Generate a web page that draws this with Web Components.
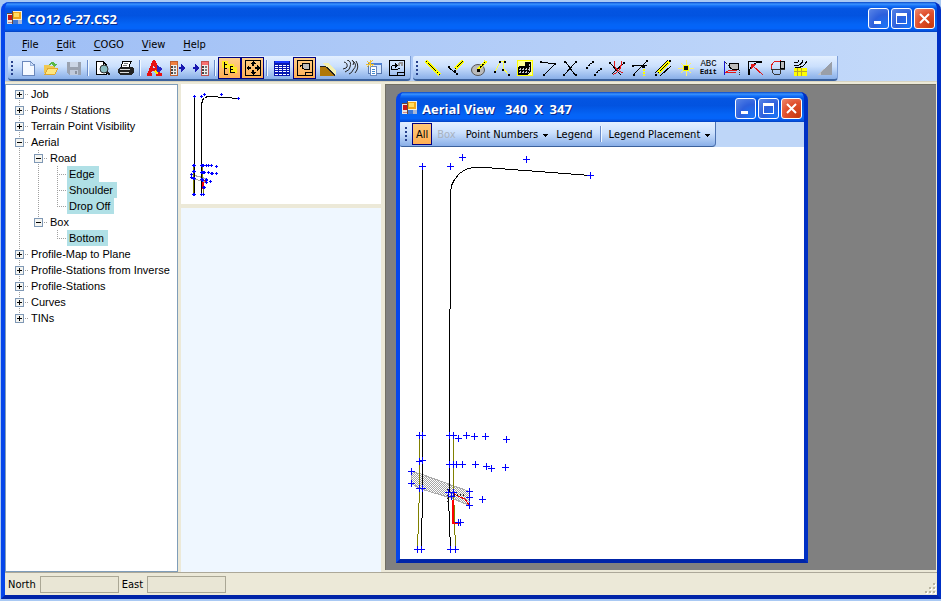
<!DOCTYPE html>
<html lang="en">
<head>
<meta charset="utf-8">
<title>CO12 6-27.CS2</title>
<style>
  html, body { height: 100%; margin: 0; }
  body {
    --ui: "DejaVu Sans Condensed", "Open Sans", sans-serif;
    --face: #ece9d8;
    box-sizing: border-box;
    padding: 2px 0 2px 1px;
    background: #a9c9f3;
    font: 11px/16px "Liberation Sans", sans-serif;
    color: #000;
    overflow: hidden;
  }
  body > xp-window { height: 100%; }
  .strips { display: flex; background: linear-gradient(90deg, #9ebef5, #c4dafa); padding-left: 3px; }
  main {
    flex: 1; min-height: 0;
    display: grid; grid-template-columns: 173px 200px 1fr; column-gap: 3px;
    background: var(--face); border-top: 1px solid #d8d4c0;
    padding: 2px 1px 0 0;
  }
  .side { display: flex; flex-direction: column; gap: 4px; min-height: 0; }
  .side > aerial-plot { height: 120px; background: #fff; }
  .notes { flex: 1; background: #eff7ff; }
  .mdi { position: relative; background: #808080; border: solid #716f64; border-width: 1px 0 0 1px; margin: 0 0 2px 1px; }
  .mdi > xp-window { position: absolute; inset: 7px 128px 7px 10px; }
</style>
</head>
<body>
<xp-window caption="CO12 6-27.CS2">
  <menu-bar items="File,Edit,COGO,View,Help"></menu-bar>
  <div class="strips">
    <tool-strip tools="new open save | preview print | font calcout calcin | tree* extents* | table view* slope contour layout cycle" label="Standard"></tool-strip>
    <tool-strip tools="line perp circle points grid angle cross parallel curves tee offset point abc region tangent shape mesh ramp" label="COGO"></tool-strip>
  </div>
  <main>
    <tree-view>
      <tree-node label="Job" kind="closed"></tree-node>
      <tree-node label="Points / Stations" kind="closed"></tree-node>
      <tree-node label="Terrain Point Visibility" kind="closed"></tree-node>
      <tree-node label="Aerial" kind="open">
        <tree-node label="Road" kind="open">
          <tree-node label="Edge" marked></tree-node>
          <tree-node label="Shoulder" marked></tree-node>
          <tree-node label="Drop Off" marked></tree-node>
        </tree-node>
        <tree-node label="Box" kind="open">
          <tree-node label="Bottom" marked></tree-node>
        </tree-node>
      </tree-node>
      <tree-node label="Profile-Map to Plane" kind="closed"></tree-node>
      <tree-node label="Profile-Stations from Inverse" kind="closed"></tree-node>
      <tree-node label="Profile-Stations" kind="closed"></tree-node>
      <tree-node label="Curves" kind="closed"></tree-node>
      <tree-node label="TINs" kind="closed"></tree-node>
    </tree-view>
    <div class="side">
      <aerial-plot overview></aerial-plot>
      <div class="notes"></div>
    </div>
    <div class="mdi">
      <xp-window caption="Aerial View   340  X  347">
        <view-bar></view-bar>
        <aerial-plot></aerial-plot>
      </xp-window>
    </div>
  </main>
  <status-bar></status-bar>
</xp-window>

<script>
const define = (name, build) => customElements.define(name, class extends HTMLElement {
  connectedCallback() {
    if (!this.shadowRoot) this.attachShadow({ mode: 'open' }).innerHTML = build(this);
  }
});
const svg = (body, w = 16, h = w, extra = '') =>
  `<svg width="${w}" height="${h}" viewBox="0 0 ${w} ${h}" shape-rendering="crispEdges" fill="none" stroke-width="1" aria-hidden="true" ${extra}>${body}</svg>`;
const dot = (x, y, c = '#000', s = 2) => `<rect x="${x}" y="${y}" width="${s}" height="${s}" fill="${c}"/>`;
const ruler = d => `<path d="${d}" stroke="#ff0" stroke-width="3"/><path d="${d}" stroke="#000" stroke-dasharray="2 1"/>`;
const keys = x => [6, 9, 12].map(y => dot(x, y, '#444') + dot(x + 3, y, '#777')).join('');

const gripCss = `
  .grip { flex: none; width: 3px; height: 15px; background: repeating-linear-gradient(#27418c 0 2px, transparent 2px 4px) 0 0 / 2px 100% no-repeat; }
  .sep { flex: none; box-sizing: border-box; width: 6px; height: 16px; border: solid transparent; border-width: 0 2px; background: linear-gradient(90deg, #6a8ccb 50%, #f1f9ff 50%) content-box; }
`;

define('xp-window', el => `
<style>
  :host {
    display: flex; flex-direction: column; box-sizing: border-box; min-width: 0;
    border: solid; border-width: 0 4px 4px; border-color: #0a3fe0 #0030c4 #0024a8 #0546ea;
    border-radius: 8px 8px 0 0; background: #0546ea; overflow: hidden;
  }
  header {
    flex: none; box-sizing: border-box; height: 30px; margin: 0 -4px; padding: 2px 6px 0 6px;
    display: flex; align-items: center; gap: 2px;
    background: linear-gradient(#0a48c8 0, #3a93ff 7%, #1470f8 13%, #0455e2 22%, #0253e0 45%, #0464f6 75%, #0464fa 88%, #0450dc 96%, #0340bd 100%);
    border-radius: 8px 8px 0 0;
  }
  h1 {
    flex: 1; margin: 0 0 0 2px; white-space: pre; overflow: hidden;
    font: bold 13px/20px "Open Sans", sans-serif; color: #fff; text-shadow: 1px 1px #0a2a8c; padding-top: 2px;
  }
  button {
    flex: none; width: 21px; height: 21px; padding: 0; border: 1px solid #fff; border-radius: 3px;
    background: radial-gradient(circle at 85% 90%, #1b74f5, #2c5fdc 50%, #5b86e6); display: grid; place-items: center;
  }
  .close { background: radial-gradient(circle at 85% 90%, #c83a10, #e04f2c 55%, #ee8a70); }
  .main { flex: 1; min-height: 0; display: flex; flex-direction: column; }
  ::slotted(aerial-plot) { flex: 1; min-height: 0; background: #fff; }
</style>
<header>
  ${svg(`<rect x="5" y="1" width="10" height="12" fill="#f4f0e0"/><rect x="6" y="2" width="8" height="7" fill="#f0a818"/><rect x="7" y="3" width="5" height="4" fill="#ffdc60"/>
    <rect x="0" y="3" width="6" height="11" fill="#e8e4e0"/><rect x="1" y="5" width="4" height="5" fill="#c81818"/><path d="M1 12.5h4" stroke="#c88"/>
    <rect x="6" y="10" width="5" height="4" fill="#3c78d8"/><rect x="11" y="10" width="4" height="4" fill="#a8b8d8"/><path d="M5.5 1V14M0 3.5H5" stroke="#684838"/>`)}
  <h1>${el.getAttribute('caption')}</h1>
  <button aria-label="Minimize">${svg('<rect x="3" y="10" width="7" height="3" fill="#fff"/>', 15)}</button>
  <button aria-label="Maximize">${svg('<path d="M2 3.5H13" stroke="#fff" stroke-width="3"/><path d="M2.5 3V12.5H12.5V3" stroke="#fff"/>', 15)}</button>
  <button class="close" aria-label="Close">${svg('<path d="M3 3L12 12M12 3L3 12" stroke="#fff" stroke-width="2" shape-rendering="auto"/>', 15)}</button>
</header>
<div class="main"><slot></slot></div>`);

define('menu-bar', el => `
<style>
  :host { display: flex; box-sizing: border-box; height: 24px; padding: 1px 0 0 8px; background: linear-gradient(90deg, #9ebef5, #c4dafa); }
  button { border: 0; padding: 0 9px; background: none; font: 11px/22px var(--ui); color: #000; }
  u { text-underline-offset: 2px; }
</style>
${el.getAttribute('items').split(',').map(t => `<button><u>${t[0]}</u>${t.slice(1)}</button>`).join('')}`);

const icons = {
  new: `<path d="M2.5 1.5H10L14.500 5V15.5H2.5Z" fill="#f4f9ff" stroke="#6a88bc"/><path d="M10 2V5.5H14" stroke="#9ab4dc" fill="#cfe0f8"/>`,
  open: `<path d="M1 5H6L7 6H12V13H1Z" fill="#f0c850"/><path d="M2 14L5 8H15L12 14Z" fill="#ffe680" stroke="#e0a830"/><path d="M6 5C7 1 11 1 12 4H14L11 7L9 4H10" fill="#58b848"/>`,
  save: `<path d="M1 2H15V15H3L1 13Z" fill="#9aa2b0"/><rect x="4" y="2" width="8" height="5" fill="#ccd6e6"/><rect x="4" y="10" width="8" height="5" fill="#c0cadc"/><rect x="9" y="11" width="2" height="3" fill="#8a92a0"/>`,
  preview: `<path d="M1.5 1.5H8L11.5 5V14.5H1.5Z" fill="#fff" stroke="#000"/><path d="M8 2V5H11" stroke="#000"/><circle cx="9" cy="9" r="4" fill="#88bcc0" stroke="#333" shape-rendering="auto"/><path d="M12 12L15 15" stroke="#222" stroke-width="2"/>`,
  print: `<path d="M5 1.5H13L11 7H3Z" fill="#fff" stroke="#000"/><path d="M6 3.5H10M5 5.5H9" stroke="#777"/><path d="M2 7H14L16 8V12L13 15H2L0 13V9Z" fill="#222"/><path d="M2 9.5H12M2 12.5H11" stroke="#ddd"/>`,
  font: `<path d="M0 14.5H5M9 14.5H15M2 14L7 1L12 14M4 9.5H11" stroke="#e81010" stroke-width="3"/><path d="M10 5L16 9L12 12H10Z" fill="#2828c0"/><path d="M8 11L11 14" stroke="#fe0" stroke-width="2"/>`,
  calcout: `<rect x="0" y="1" width="8" height="15" fill="#c06030"/><rect x="1" y="5" width="6" height="10" fill="#eee"/><rect x="1" y="2" width="6" height="3" fill="#f08040"/>${keys(1)}<path d="M9 7H11V4L16 8L11 12V9H9Z" fill="#1818b0"/>`,
  calcin: `<rect x="8" y="1" width="8" height="15" fill="#c05050"/><rect x="9" y="5" width="6" height="10" fill="#eee"/><rect x="9" y="2" width="6" height="3" fill="#f87070"/>${keys(9)}<path d="M0 7H2V4L7 8L2 12V9H0Z" fill="#1818b0"/>`,
  tree: `<path d="M0 1H6V4H12V7H15V13H7V8H0Z" fill="#ffee20"/><path d="M2.5 2V14.5H6M2 4.5H5M2 8.5H5M8.5 6V13M8 6.5H11M8 9.5H11M8 12.5H13" stroke="#000"/>`,
  extents: `<rect x="0.5" y="0.5" width="15" height="15" stroke="#000"/><path d="M8 1L11 4H5ZM8 15L5 12H11ZM1 8L4 5V11ZM15 8L12 11V5Z" fill="#000"/><path d="M8 4V6M8 10V12M4 8H6M10 8H12" stroke="#000" stroke-width="2"/>`,
  table: `<rect x="0" y="1" width="16" height="15" fill="#0818b0"/><rect x="1" y="1" width="14" height="2" fill="#1838ff"/><path d="M1 5H15M1 7.5H15M1 9.5H15M1 11.5H15M1 14H15" stroke="#fff"/><path d="M4.5 4V15M8.5 4V15M12.5 4V15" stroke="#0818b0"/>`,
  view: `<rect x="0.5" y="0.5" width="15" height="15" stroke="#000"/><path d="M6 3.500H12.5V9.500H8L5.500 8.500V4Z" fill="#bbb" stroke="#000"/><path d="M5 5.500H3.500V7M8.5 15V12.5H15" stroke="#000"/>`,
  slope: `<path d="M0 7H6L14 15V16H0Z" fill="#b07808"/><path d="M2 3L7 7L16 15V11L8 3Z" fill="#f4f0b0"/><path d="M6 7L15 15M7 7L15 16M0 6.5H6" stroke="#222"/>`,
  contour: `<path d="M1 2Q5 3 4 7Q4 8 0 9M4 0Q9 1 7 7Q7 10 2 12M10 1Q15 5 10 10Q9 13 6 14M9 0Q12 2 10 5M13 1Q17 7 12 13" stroke="#222" shape-rendering="auto"/>`,
  layout: `<rect x="2.5" y="3.5" width="13" height="10" fill="#d8e8fc" stroke="#5878b0"/><rect x="3" y="3" width="13" height="2" fill="#5080d0"/><rect x="4.5" y="6.5" width="6" height="9" fill="#fff" stroke="#6888c0"/><path d="M6 9.5H9M6 11.5H9M6 13.5H9" stroke="#48c"/><path d="M1 1L7 6M7 0L1 7M4 0V7M0 4H8" stroke="#f0c030"/>`,
  cycle: `<rect x="0.5" y="0.5" width="15" height="15" stroke="#000"/><path d="M2.500 6V9.500H8L10.500 8M3 5.5H8M6 3.500L8 5.5L6 7.500" stroke="#000"/><path d="M10 6Q9 3 13 3L13 6" stroke="#999" stroke-width="2"/><path d="M8.5 15V12.5H15" stroke="#000"/>`,
  line: ruler('M1 1L15 15'),
  perp: ruler('M7 9L15 1') + `<path d="M0 7L9 14" stroke="#000"/>` + dot(0, 6) + dot(6, 10) + dot(8, 13),
  circle: `<ellipse cx="7" cy="10" rx="6.500" ry="5.500" fill="#bbb" stroke="#555" shape-rendering="auto"/>` + ruler('M7 10L15 1') + dot(6, 9, '#000', 3),
  points: `<path d="M1 12L6 2L10 1L9 8L14 14" stroke="#ff4"/>` + dot(5, 1) + dot(10, 1) + dot(0, 11) + dot(8, 9) + dot(14, 14),
  grid: `<rect x="0.5" y="0.5" width="15" height="15" fill="#ffff9a" stroke="#ff0"/><path d="M2 6H8V2H14V11L10 15H1V7Z" fill="#000"/><path d="M3.5 8V14M6.5 8V14M9.5 8V14M12.5 4V11M2 9.5H13M2 12.5H12" stroke="#c8c8d0" stroke-dasharray="2 1"/>`,
  angle: `<path d="M1 2L15 4L4 15" stroke="#000"/>` + dot(0, 1) + dot(14, 3) + dot(3, 14),
  cross: `<path d="M2 1L12 15M13 2L1 15" stroke="#000"/>` + dot(1, 1) + dot(12, 1) + dot(0, 14) + dot(12, 14),
  parallel: `<path d="M0 8L8 1M8 15L16 8" stroke="#000" stroke-dasharray="2 1"/>` + dot(0, 7) + dot(6, 1) + dot(8, 14) + dot(14, 8),
  curves: `<path d="M1 3L12 15M15 3L3 14" stroke="#000"/><path d="M6 1Q3 9 14 13M12 1Q14 9 4 15" stroke="#e01818"/>` + dot(0, 2) + dot(14, 2),
  tee: `<path d="M0 5.5H15M16 0L1 15" stroke="#000"/><path d="M11.5 6V16" stroke="#ff0" stroke-width="2" stroke-dasharray="2 1"/>` + dot(0, 5) + dot(14, 0) + dot(1, 14) + dot(10, 5, '#000', 3),
  offset: ruler('M3 13L14 2') + `<path d="M0 13L13 0M5 16L16 6" stroke="#000"/>` + dot(0, 14) + dot(14, 0),
  point: `<path d="M3 3L13 13M13 3L3 13M8 0V16M0 8H16" stroke="#fff26a"/><rect x="5" y="5" width="6" height="6" fill="#ff0"/><rect x="6" y="6" width="4" height="4" fill="#111"/>`,
  region: `<path d="M0.5 1V15" stroke="#1818d0"/><path d="M6 3.5H14.5V9.5H9L5 7V4Z" fill="#bbb" stroke="#000"/><path d="M1 13L6 10H13M1 13L12 12" stroke="#e01818"/><path d="M15.5 10V16H6M1 2L5 6" stroke="#333" stroke-dasharray="1 1"/>`,
  tangent: `<path d="M1.5 1V15M1 1.5H15M2 15Q2 2 15 2" stroke="#000"/><path d="M5 5L16 15" stroke="#e01818"/><path d="M4 4H9L4 9Z" fill="#e01818"/>`,
  shape: `<path d="M10 9V1L4 2L1 6V9H10" stroke="#e01818"/><rect x="10.500" y="1.5" width="4" height="7" fill="#bbb" stroke="#000"/><path d="M1 9.5H15M10.500 9V14L5 15L2 12V9" stroke="#333"/>`,
  mesh: `<rect x="1" y="8" width="13" height="8" fill="#ff0"/><path d="M4.5 8V16M8.5 8V16M1 11.5H14" stroke="#b8a830"/><path d="M1 3Q6 3 6 0M1 6Q9 6 10 0M2 8Q11 8 14 1" stroke="#000"/>`,
  ramp: `<path d="M1 15H8V9Z" fill="#c0c4cc"/><path d="M5 13L16 1V15H5Z" fill="#9a9fa8"/>`
};

define('tool-strip', el => `
<style>
  :host {
    display: flex; align-items: center; box-sizing: border-box; height: 25px; padding: 1px 2px 0 3px; margin-right: 2px;
    background: linear-gradient(#e3efff, #cbe0fd 45%, #89afe8); border-bottom: 2px solid #3b619c; border-right: 1px solid #7d9fd8;
    border-radius: 2px 0 4px 4px;
  }
  ${gripCss}
  .grip { margin-right: 2px; }
  button { box-sizing: border-box; width: 23px; height: 22px; padding: 0; border: 0; background: none; display: grid; place-items: center; }
  button.on { border: 1px solid #000080; background: linear-gradient(#ffd08a, #ffb055); }
  .abc { display: grid; color: #000; font: 9px/8px "Liberation Mono", monospace; }
  .abc b { font: bold 7px/8px "Liberation Mono", monospace; }
</style>
<span class="grip"></span>
${el.getAttribute('tools').split(' ').map(t => {
  if (t === '|') return '<span class="sep"></span>';
  const name = t.replace('*', '');
  const face = name === 'abc' ? '<span class="abc">ABC<b>Edit</b></span>' : svg(icons[name]);
  return `<button class="${t.endsWith('*') ? 'on' : ''}" aria-label="${name}">${face}</button>`;
}).join('')}`);

define('view-bar', () => `
<style>
  :host { display: flex; flex: none; height: 25px; background: #bed6f8; }
  .strip {
    display: flex; align-items: center; box-sizing: border-box; padding: 0 2px 0 5px;
    background: linear-gradient(#e3efff, #cbe0fd 45%, #89afe8); border-bottom: 1px solid #3b619c; border-right: 1px solid #4a70b0;
    border-radius: 2px 0 4px 2px; white-space: nowrap;
  }
  ${gripCss}
  .grip { margin-right: 4px; }
  button { box-sizing: border-box; height: 22px; padding: 2px 5px 0; border: 0; background: none; font: 11px/20px var(--ui); color: #000; display: flex; align-items: center; gap: 5px; }
  .drop { padding-right: 3px; }
  .on { padding: 2px 3px 0; border: 1px solid #000080; background: linear-gradient(#ffc878, #ffb055); }
  button:disabled { color: #a9b2bf; }
</style>
<div class="strip">
  <span class="grip"></span>
  <button class="on">All</button>
  <button disabled>Box</button>
  <button class="drop">Point Numbers ${svg('<path d="M0 0H5L2.5 3Z" fill="#000"/>', 5, 3)}</button>
  <button>Legend</button>
  <span class="sep"></span>
  <button class="drop">Legend Placement ${svg('<path d="M0 0H5L2.5 3Z" fill="#000"/>', 5, 3)}</button>
</div>`);

define('tree-view', () => `
<style>
  :host { display: block; box-sizing: border-box; border: 1px solid #7f9db9; background: #fff; padding: 1px 0 0 4px; overflow: hidden; }
</style>
<slot></slot>`);

define('tree-node', el => {
  const first = !el.previousElementSibling && el.parentElement.localName === 'tree-view';
  const last = !el.nextElementSibling;
  const kind = el.getAttribute('kind');
  const box = kind ? `<rect x="5.5" y="4.5" width="8" height="8" fill="#f4f4f0" stroke="#7f98b5"/><path d="M7 8.5H12${kind === 'closed' ? 'M9.5 6V11' : ''}" stroke="#000"/>` : '';
  const dots = `<path d="M9.5 ${first ? 8 : 0}V${last ? 9 : 16}M9 8.5H19" stroke="#a0a0a0" stroke-dasharray="1 1"/>`;
  return `
<style>
  :host { display: block; }
  .row { display: flex; height: 16px; }
  .guide { flex: none; width: 19px; height: 16px; padding: 0; border: 0; background: none; }
  svg { display: block; }
  .text { padding: 0 4px 0 2px; white-space: nowrap; }
  .marked { background: #b0e0e6; }
  .kids { padding-left: 19px; ${last ? '' : 'background: repeating-linear-gradient(#a0a0a0 0 1px, #fff 1px 2px) 9px 0 / 1px 100% no-repeat;'} }
</style>
<div class="row">
  ${kind ? `<button class="guide" aria-label="Toggle ${el.getAttribute('label')}">${svg(dots + box, 19, 16)}</button>` : `<span class="guide">${svg(dots, 19, 16)}</span>`}
  <span class="text ${el.hasAttribute('marked') ? 'marked' : ''}">${el.getAttribute('label')}</span>
</div>
<div class="kids"><slot></slot></div>`;
});

/* Survey drawing: one set of coordinates, shown full size or as an overview. */
const marks = [[22,19],[50,19],[62,10],[126,12],[190,28],
  [19,288],[22,288],[49,288],[53,288],[58,291],[66,288],[74,289],[85,289],[106,292],
  [19,314],[22,313],[49,317],[53,317],[56,317],[62,317],[75,317],[86,319],[91,321],[105,320],
  [11,324],[11,336],[19,341],[22,341],[48,345],[53,345],[69,344],[69,350],[69,358],[82,352],[51,349],
  [58,375],[60,375],[17,402],[21,402],[50,402],[55,402]];
define('aerial-plot', el => {
  const mini = el.hasAttribute('overview');
  const X = x => mini ? Math.round(13 + (x - 22) * 0.262) : x;
  const Y = y => mini ? Math.round(12 + (y - 19) * 0.255) : y;
  const pts = list => list.map(([x, y]) => `${X(x) + 0.5} ${Y(y) + 0.5}`).join('L');
  const path = (list, c, w = 1) => `<path d="M${pts(list)}" stroke="${c}" stroke-width="${w}"/>`;
  const arm = mini ? 1 : 3;
  const size = mini ? [200, 120] : [404, 412];
  return `
<style>:host { display: block; overflow: hidden; } svg { display: block; width: 100%; height: 100%; }</style>
${svg(`
  <defs><pattern id="h" width="2" height="2" patternUnits="userSpaceOnUse"><rect width="2" height="2" fill="#fff"/><path d="M0 .5H1M1 1.5H2" stroke="#a4a4a4"/></pattern></defs>
  <path d="M${pts([[11,324],[22,327],[52,338],[69,344],[69,358],[52,351],[19,341],[11,336]])}Z" fill="${mini ? '#fff' : 'url(#h)'}" stroke="#aaa"/>
  ${path([[22,19],[22,330],[22,341],[21,402]], '#000')}
  ${path([[190,28],[85,20],[72,20],[65,22],[59,26],[54,32],[51,38],[50,45],[49,288],[49,340],[48,350],[50,402]], '#000')}
  ${path([[19,288],[19,341],[17,402]], '#808000')}${path([[53,288],[53,343],[55,402]], '#808000')}
  ${path([[53,345],[55,347],[60,350],[64,351],[69,358]], '#e00')}
  ${mini ? '' : '<path d="M48 342V355M54 348H66" stroke="#222" stroke-dasharray="1 2" stroke-width="2"/>'}
  ${path([[52.5,352],[52.5,375],[60,375]], '#f00', 2)}
  ${marks.map(([x, y]) => `<path d="M${X(x) - arm} ${Y(y) + 0.5}h${arm * 2 + 1}M${X(x) + 0.5} ${Y(y) - arm}v${arm * 2 + 1}" stroke="#00f"/>`).join('')}
`, ...size, 'preserveAspectRatio="xMinYMin meet"')}`;
});

define('status-bar', () => `
<style>
  :host { display: flex; box-sizing: border-box; flex: none; align-items: center; height: 23px; padding-left: 3px; background: var(--face, #ece9d8); border-top: 1px solid #aca899; font: 11px/16px var(--ui); }
  input { box-sizing: border-box; width: 79px; height: 17px; margin: 0 3px 0 4px; padding: 0 2px; border: 1px solid #aaa795; background: #e9e6d5; font: inherit; }
  label { padding-top: 2px; }
  .spacer { flex: 1; }
  svg { align-self: flex-end; }
</style>
<label for="n">North</label><input id="n" readonly>
<label for="e">East</label><input id="e" readonly>
<span class="spacer"></span>
${svg([[9,1],[5,5],[9,5],[1,9],[5,9],[9,9]].map(([x, y]) => dot(x + 1, y + 1, '#fff') + dot(x, y, '#b8b4a0')).join(''), 13)}`);
</script>
</body>
</html>
